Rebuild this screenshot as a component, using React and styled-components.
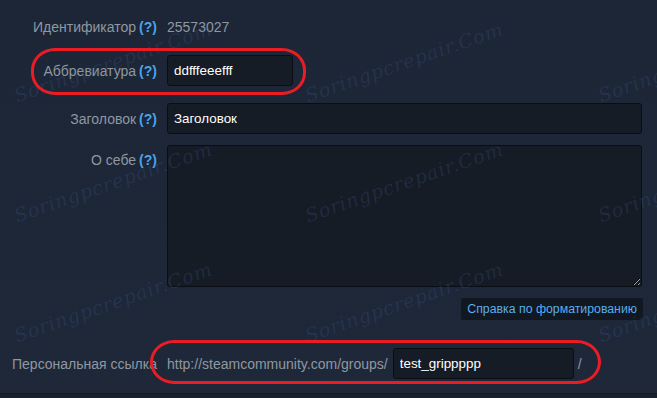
import React from "react";
import styled, { createGlobalStyle } from "styled-components";

const GlobalStyle = createGlobalStyle`
  html, body {
    margin: 0;
    padding: 0;
    background: #18202c;
  }
  body {
    font-family: "Liberation Sans", Arial, sans-serif;
    font-size: 14px;
  }
`;

const Panel = styled.div`
  position: relative;
  width: 657px;
  height: 394px;
  box-sizing: border-box;
  padding-top: 17px;
  background: linear-gradient(180deg, #1c2636 0%, #1d2738 60%, #1e2839 100%);
  border-bottom: 1px solid #141b25;
  overflow: hidden;
`;

const Row = styled.div`
  display: flex;
  align-items: ${(p) => (p.$top ? "flex-start" : "center")};
  margin-top: ${(p) => p.$mt || 0}px;
  min-height: ${(p) => p.$h || 20}px;
`;

const Label = styled.div`
  width: 157px;
  flex-shrink: 0;
  text-align: right;
  color: #8f98a0;
  white-space: nowrap;
  padding-top: ${(p) => p.$pt || 0}px;
  line-height: 20px;
`;

const Help = styled.span`
  color: #4aa3ea;
  font-weight: bold;
  margin-left: 3px;
`;

const Field = styled.div`
  margin-left: 10px;
  width: 475px;
  display: flex;
  align-items: center;
  color: #8f98a0;
`;

const Value = styled.span`
  color: #8f98a0;
  line-height: 20px;
`;

const TextInput = styled.input`
  box-sizing: border-box;
  width: ${(p) => p.$w || "100%"};
  height: 31px;
  padding: 0 6px;
  background: #161c25;
  border: 1px solid #0a0e14;
  border-radius: 3px;
  color: #ffffff;
  font-family: "Liberation Sans", Arial, sans-serif;
  font-size: 13.4px;
  outline: none;
`;

const TextArea = styled.textarea`
  box-sizing: border-box;
  width: 476px;
  height: 142px;
  background: #161c25;
  border: 1px solid #0a0e14;
  border-radius: 3px;
  color: #ffffff;
  font-family: "Liberation Sans", Arial, sans-serif;
  font-size: 13px;
  outline: none;
  resize: both;
  display: block;
`;

const HelpRow = styled.div`
  display: flex;
  justify-content: flex-end;
  width: 643px;
  margin-top: 11px;
`;

const HelpButton = styled.div`
  height: 22px;
  line-height: 22px;
  padding: 0 6px;
  background: #121821;
  border-radius: 2px;
  color: #58aeee;
  font-size: 12.3px;
  white-space: nowrap;
`;

const Prefix = styled.span`
  color: #8f98a0;
  margin-right: 5px;
  white-space: nowrap;
`;

const Slash = styled.span`
  color: #8f98a0;
  margin-left: 4px;
`;

const Marker = styled.div`
  position: absolute;
  left: ${(p) => p.$x}px;
  top: ${(p) => p.$y}px;
  width: ${(p) => p.$w}px;
  height: ${(p) => p.$h}px;
  box-sizing: border-box;
  border: 3px solid #ec1c24;
  border-radius: 24px / 22px;
  pointer-events: none;
`;

const Watermark = styled.div`
  position: absolute;
  left: ${(p) => p.$x}px;
  top: ${(p) => p.$y}px;
  transform: translate(-50%, -50%) rotate(-19deg);
  font-family: "DejaVu Serif", serif;
  font-style: italic;
  font-size: 19px;
  letter-spacing: 0.8px;
  color: rgba(60, 90, 145, 0.26);
  white-space: nowrap;
  pointer-events: none;
`;

const marks = [];
[113, 404, 697].forEach((x) => {
  [62, 182, 302].forEach((y) => marks.push({ x, y }));
});

export default function App() {
  return (
    <>
      <GlobalStyle />
      <Panel>
        <Row $h={20}>
          <Label>
            Идентификатор<Help>(?)</Help>
          </Label>
          <Field>
            <Value>25573027</Value>
          </Field>
        </Row>

        <Row $mt={18} $h={31}>
          <Label>
            Аббревиатура<Help>(?)</Help>
          </Label>
          <Field>
            <TextInput $w="126px" readOnly value="ddfffeeefff" />
          </Field>
        </Row>

        <Row $mt={17} $h={31}>
          <Label>
            Заголовок<Help>(?)</Help>
          </Label>
          <Field>
            <TextInput readOnly value="Заголовок" />
          </Field>
        </Row>

        <Row $mt={11} $top>
          <Label $pt={5}>
            О себе<Help>(?)</Help>
          </Label>
          <Field>
            <TextArea readOnly value="" />
          </Field>
        </Row>

        <HelpRow>
          <HelpButton>Справка по форматированию</HelpButton>
        </HelpRow>

        <Row $mt={28} $h={31}>
          <Label>Персональная ссылка</Label>
          <Field>
            <Prefix>http://steamcommunity.com/groups/</Prefix>
            <TextInput $w="181px" readOnly value="test_grippppp" />
            <Slash>/</Slash>
          </Field>
        </Row>

        {marks.map((m, i) => (
          <Watermark key={i} $x={m.x} $y={m.y}>
            Soringpcrepair.Com
          </Watermark>
        ))}

        <Marker $x={31} $y={48} $w={275} $h={47} />
        <Marker $x={150} $y={340} $w={451} $h={44} />
      </Panel>
    </>
  );
}
